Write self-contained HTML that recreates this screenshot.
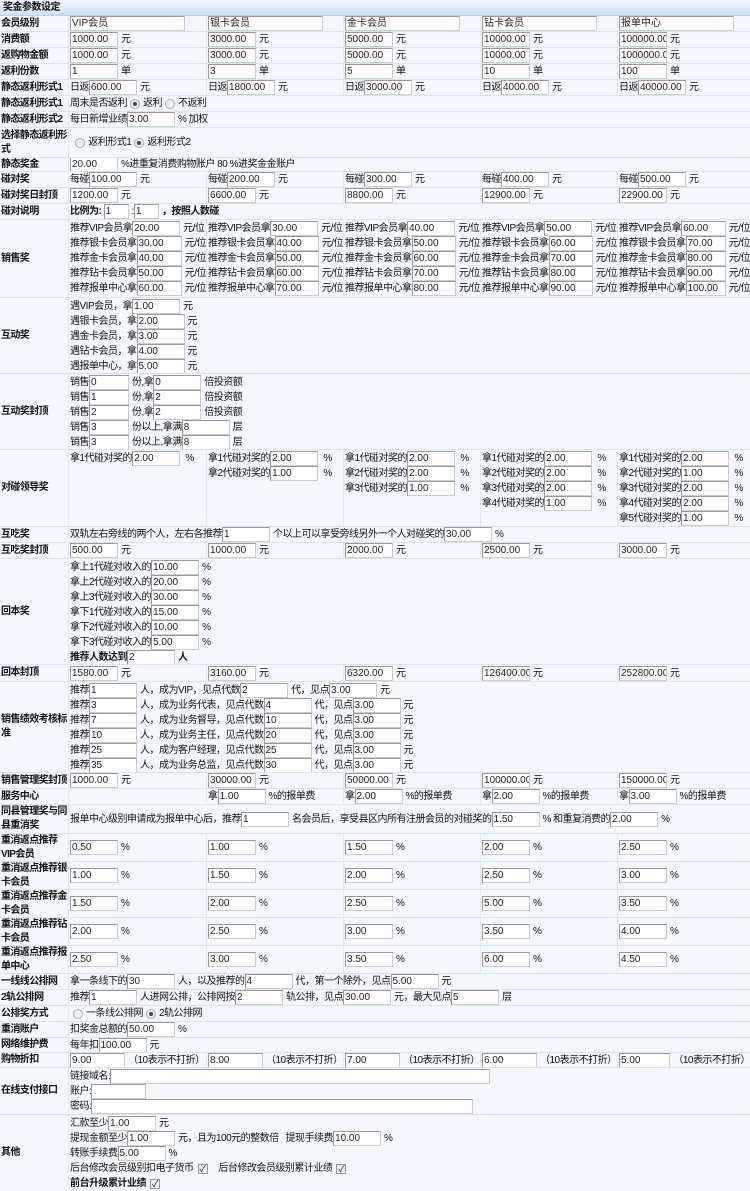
<!DOCTYPE html>
<html><head><meta charset="utf-8">
<style>
*{margin:0;padding:0;box-sizing:border-box}
body{width:750px;height:1191px;overflow:hidden;background:#f4f8fd;font-family:"Liberation Sans","Noto Sans CJK SC",sans-serif;font-size:10px;letter-spacing:-0.5px;color:#111;position:relative}
.r{position:absolute;left:0;width:750px;border-bottom:1px solid #d5e5f5}
.l{position:absolute;left:1px;top:0;width:67px;height:100%;display:flex;align-items:center;font-weight:bold;line-height:14px;letter-spacing:-0.6px}
.c{position:absolute;top:0;height:100%;display:flex;flex-direction:column;justify-content:center;white-space:nowrap;border-left:1px solid #dde9f6;padding-left:1px;overflow:hidden}
.c.t{justify-content:flex-start;padding-top:1px}
.ln{height:15px;line-height:15px;display:flex;align-items:center}
i{font-style:normal;display:inline-block;height:15px;border:1px solid #a9a9a9;border-color:#999 #ccc #ccc #999;background:#fff;width:48px;line-height:13px;padding-left:1px;color:#222;vertical-align:middle;margin:0 3px 0 0;overflow:hidden;letter-spacing:0}
.w{width:115px}
.rd{display:inline-block;width:10px;height:10px;border:1px solid #aaa;border-radius:50%;background:#eee;margin:0 3px;position:relative}
.rd.on:after{content:"";position:absolute;left:2px;top:2px;width:4px;height:4px;border-radius:50%;background:#444}
.cb{display:inline-block;width:10px;height:10px;border:1px solid #999;background:#eee;margin:0 4px;font-size:9px;line-height:8px;text-align:center}
.hd{position:absolute;left:0;top:0;width:750px;height:16px;background:linear-gradient(#eef5fc,#cfe1f3);border-bottom:1px solid #b9d3ec;font-weight:bold;padding:2px 3px;line-height:12px}
b{font-weight:bold}
.c1{left:68px;width:138px}.c2{left:206px;width:137px}.c3{left:343px;width:137px}.c4{left:480px;width:137px}.c5{left:617px;width:133px}
.wide{width:682px}
</style></head><body>
<div class="hd">奖金参数设定</div>

<div class="r" style="top:16px;height:16px"><div class="l">会员级别</div>
<div class="c c1"><div class="ln"><i class="w">VIP会员</i></div></div>
<div class="c c2"><div class="ln"><i class="w">银卡会员</i></div></div>
<div class="c c3"><div class="ln"><i class="w">金卡会员</i></div></div>
<div class="c c4"><div class="ln"><i class="w">钻卡会员</i></div></div>
<div class="c c5"><div class="ln"><i class="w">报单中心</i></div></div></div>

<div class="r" style="top:32px;height:16px"><div class="l">消费额</div>
<div class="c c1"><div class="ln"><i>1000.00</i>元</div></div>
<div class="c c2"><div class="ln"><i>3000.00</i>元</div></div>
<div class="c c3"><div class="ln"><i>5000.00</i>元</div></div>
<div class="c c4"><div class="ln"><i>10000.00</i>元</div></div>
<div class="c c5"><div class="ln"><i>100000.00</i>元</div></div></div>

<div class="r" style="top:48px;height:16px"><div class="l">返购物金额</div>
<div class="c c1"><div class="ln"><i>1000.00</i>元</div></div>
<div class="c c2"><div class="ln"><i>3000.00</i>元</div></div>
<div class="c c3"><div class="ln"><i>5000.00</i>元</div></div>
<div class="c c4"><div class="ln"><i>10000.00</i>元</div></div>
<div class="c c5"><div class="ln"><i>1000000.00</i>元</div></div></div>

<div class="r" style="top:64px;height:16px"><div class="l">返利份数</div>
<div class="c c1"><div class="ln"><i>1</i>单</div></div>
<div class="c c2"><div class="ln"><i>3</i>单</div></div>
<div class="c c3"><div class="ln"><i>5</i>单</div></div>
<div class="c c4"><div class="ln"><i>10</i>单</div></div>
<div class="c c5"><div class="ln"><i>100</i>单</div></div></div>

<div class="r" style="top:80px;height:16px"><div class="l">静态返利形式1</div>
<div class="c c1"><div class="ln">日返<i>600.00</i>元</div></div>
<div class="c c2"><div class="ln">日返<i>1800.00</i>元</div></div>
<div class="c c3"><div class="ln">日返<i>3000.00</i>元</div></div>
<div class="c c4"><div class="ln">日返<i>4000.00</i>元</div></div>
<div class="c c5"><div class="ln">日返<i>40000.00</i>元</div></div></div>

<div class="r" style="top:96px;height:16px"><div class="l">静态返利形式1</div>
<div class="c c1 wide"><div class="ln">周末是否返利<span class="rd on"></span>返利<span class="rd"></span>不返利</div></div></div>

<div class="r" style="top:112px;height:16px"><div class="l">静态返利形式2</div>
<div class="c c1 wide"><div class="ln">每日新增业绩<i>3.00</i>% 加权</div></div></div>

<div class="r" style="top:128px;height:30px"><div class="l">选择静态返利形式</div>
<div class="c c1 wide"><div class="ln">&nbsp;<span class="rd"></span>返利形式1 <span class="rd on"></span>返利形式2</div></div></div>

<div class="r" style="top:158px;height:14px"><div class="l">静态奖金</div>
<div class="c c1 wide"><div class="ln"><i>20.00</i>%进重复消费购物账户 80 %进奖金金账户</div></div></div>

<div class="r" style="top:172px;height:16px"><div class="l">碰对奖</div>
<div class="c c1"><div class="ln">每碰<i>100.00</i>元</div></div>
<div class="c c2"><div class="ln">每碰<i>200.00</i>元</div></div>
<div class="c c3"><div class="ln">每碰<i>300.00</i>元</div></div>
<div class="c c4"><div class="ln">每碰<i>400.00</i>元</div></div>
<div class="c c5"><div class="ln">每碰<i>500.00</i>元</div></div></div>

<div class="r" style="top:188px;height:16px"><div class="l">碰对奖日封顶</div>
<div class="c c1"><div class="ln"><i>1200.00</i>元</div></div>
<div class="c c2"><div class="ln"><i>6600.00</i>元</div></div>
<div class="c c3"><div class="ln"><i>8800.00</i>元</div></div>
<div class="c c4"><div class="ln"><i>12900.00</i>元</div></div>
<div class="c c5"><div class="ln"><i>22900.00</i>元</div></div></div>

<div class="r" style="top:204px;height:16px"><div class="l">碰对说明</div>
<div class="c c1 wide"><div class="ln"><b>比例为:</b>&nbsp;<i style="width:25px">1</i>:<i style="width:25px">1</i><b>，按照人数碰</b></div></div></div>

<div class="r" style="top:220px;height:78px"><div class="l">销售奖</div>
<div class="c t c1"><div class="ln">推荐VIP会员拿<i>20.00</i>元/位</div><div class="ln">推荐银卡会员拿<i>30.00</i>元/位</div><div class="ln">推荐金卡会员拿<i>40.00</i>元/位</div><div class="ln">推荐钻卡会员拿<i>50.00</i>元/位</div><div class="ln">推荐报单中心拿<i>60.00</i>元/位</div></div>
<div class="c t c2"><div class="ln">推荐VIP会员拿<i>30.00</i>元/位</div><div class="ln">推荐银卡会员拿<i>40.00</i>元/位</div><div class="ln">推荐金卡会员拿<i>50.00</i>元/位</div><div class="ln">推荐钻卡会员拿<i>60.00</i>元/位</div><div class="ln">推荐报单中心拿<i>70.00</i>元/位</div></div>
<div class="c t c3"><div class="ln">推荐VIP会员拿<i>40.00</i>元/位</div><div class="ln">推荐银卡会员拿<i>50.00</i>元/位</div><div class="ln">推荐金卡会员拿<i>60.00</i>元/位</div><div class="ln">推荐钻卡会员拿<i>70.00</i>元/位</div><div class="ln">推荐报单中心拿<i>80.00</i>元/位</div></div>
<div class="c t c4"><div class="ln">推荐VIP会员拿<i>50.00</i>元/位</div><div class="ln">推荐银卡会员拿<i>60.00</i>元/位</div><div class="ln">推荐金卡会员拿<i>70.00</i>元/位</div><div class="ln">推荐钻卡会员拿<i>80.00</i>元/位</div><div class="ln">推荐报单中心拿<i>90.00</i>元/位</div></div>
<div class="c t c5"><div class="ln">推荐VIP会员拿<i>60.00</i>元/位</div><div class="ln">推荐银卡会员拿<i>70.00</i>元/位</div><div class="ln">推荐金卡会员拿<i>80.00</i>元/位</div><div class="ln">推荐钻卡会员拿<i>90.00</i>元/位</div><div class="ln">推荐报单中心拿<i>100.00</i>元/位</div></div></div>

<div class="r" style="top:298px;height:76px"><div class="l">互动奖</div>
<div class="c t c1 wide"><div class="ln">遇VIP会员，拿<i>1.00</i>元</div><div class="ln">遇银卡会员，拿<i>2.00</i>元</div><div class="ln">遇金卡会员，拿<i>3.00</i>元</div><div class="ln">遇钻卡会员，拿<i>4.00</i>元</div><div class="ln">遇报单中心，拿<i>5.00</i>元</div></div></div>

<div class="r" style="top:374px;height:76px"><div class="l">互动奖封顶</div>
<div class="c t c1 wide"><div class="ln">销售<i style="width:40px">0</i>份,拿<i>0</i>倍投资额</div><div class="ln">销售<i style="width:40px">1</i>份,拿<i>2</i>倍投资额</div><div class="ln">销售<i style="width:40px">2</i>份,拿<i>2</i>倍投资额</div><div class="ln">销售<i style="width:40px">3</i>份以上,拿满<i>8</i>层</div><div class="ln">销售<i style="width:40px">3</i>份以上,拿满<i>8</i>层</div></div></div>

<div class="r" style="top:450px;height:77px"><div class="l">对碰领导奖</div>
<div class="c t c1"><div class="ln">拿1代碰对奖的<i>2.00</i>&nbsp;%</div></div>
<div class="c t c2"><div class="ln">拿1代碰对奖的<i>2.00</i>&nbsp;%</div><div class="ln">拿2代碰对奖的<i>1.00</i>&nbsp;%</div></div>
<div class="c t c3"><div class="ln">拿1代碰对奖的<i>2.00</i>&nbsp;%</div><div class="ln">拿2代碰对奖的<i>2.00</i>&nbsp;%</div><div class="ln">拿3代碰对奖的<i>1.00</i>&nbsp;%</div></div>
<div class="c t c4"><div class="ln">拿1代碰对奖的<i>2.00</i>&nbsp;%</div><div class="ln">拿2代碰对奖的<i>2.00</i>&nbsp;%</div><div class="ln">拿3代碰对奖的<i>2.00</i>&nbsp;%</div><div class="ln">拿4代碰对奖的<i>1.00</i>&nbsp;%</div></div>
<div class="c t c5"><div class="ln">拿1代碰对奖的<i>2.00</i>&nbsp;%</div><div class="ln">拿2代碰对奖的<i>1.00</i>&nbsp;%</div><div class="ln">拿3代碰对奖的<i>2.00</i>&nbsp;%</div><div class="ln">拿4代碰对奖的<i>2.00</i>&nbsp;%</div><div class="ln">拿5代碰对奖的<i>1.00</i>&nbsp;%</div></div></div>

<div class="r" style="top:527px;height:16px"><div class="l">互吃奖</div>
<div class="c c1 wide"><div class="ln">双轨左右旁线的两个人，左右各推荐<i>1</i>个以上可以享受旁线另外一个人对碰奖的<i>30.00</i>%</div></div></div>

<div class="r" style="top:543px;height:16px"><div class="l">互吃奖封顶</div>
<div class="c c1"><div class="ln"><i>500.00</i>元</div></div>
<div class="c c2"><div class="ln"><i>1000.00</i>元</div></div>
<div class="c c3"><div class="ln"><i>2000.00</i>元</div></div>
<div class="c c4"><div class="ln"><i>2500.00</i>元</div></div>
<div class="c c5"><div class="ln"><i>3000.00</i>元</div></div></div>

<div class="r" style="top:559px;height:106px"><div class="l">回本奖</div>
<div class="c t c1 wide"><div class="ln">拿上1代碰对收入的<i>10.00</i>%</div><div class="ln">拿上2代碰对收入的<i>20.00</i>%</div><div class="ln">拿上3代碰对收入的<i>30.00</i>%</div><div class="ln">拿下1代碰对收入的<i>15.00</i>%</div><div class="ln">拿下2代碰对收入的<i>10.00</i>%</div><div class="ln">拿下3代碰对收入的<i>5.00</i>%</div><div class="ln"><b>推荐人数达到</b><i>2</i><b>人</b></div></div></div>

<div class="r" style="top:665px;height:17px"><div class="l">回本封顶</div>
<div class="c c1"><div class="ln"><i>1580.00</i>元</div></div>
<div class="c c2"><div class="ln"><i>3160.00</i>元</div></div>
<div class="c c3"><div class="ln"><i>6320.00</i>元</div></div>
<div class="c c4"><div class="ln"><i>126400.00</i>元</div></div>
<div class="c c5"><div class="ln"><i>252800.00</i>元</div></div></div>

<div class="r" style="top:682px;height:91px"><div class="l">销售绩效考核标准</div>
<div class="c t c1 wide"><div class="ln">推荐<i>1</i>人，成为VIP，见点代数<i>2</i>代，见点<i>3.00</i>元</div><div class="ln">推荐<i>3</i>人，成为业务代表，见点代数<i>4</i>代，见点<i>3.00</i>元</div><div class="ln">推荐<i>7</i>人，成为业务督导，见点代数<i>10</i>代，见点<i>3.00</i>元</div><div class="ln">推荐<i>10</i>人，成为业务主任，见点代数<i>20</i>代，见点<i>3.00</i>元</div><div class="ln">推荐<i>25</i>人，成为客户经理，见点代数<i>25</i>代，见点<i>3.00</i>元</div><div class="ln">推荐<i>35</i>人，成为业务总监，见点代数<i>30</i>代，见点<i>3.00</i>元</div></div></div>

<div class="r" style="top:773px;height:16px"><div class="l">销售管理奖封顶</div>
<div class="c c1"><div class="ln"><i>1000.00</i>元</div></div>
<div class="c c2"><div class="ln"><i>30000.00</i>元</div></div>
<div class="c c3"><div class="ln"><i>50000.00</i>元</div></div>
<div class="c c4"><div class="ln"><i>100000.00</i>元</div></div>
<div class="c c5"><div class="ln"><i>150000.00</i>元</div></div></div>

<div class="r" style="top:789px;height:16px"><div class="l">服务中心</div>
<div class="c c1"></div>
<div class="c c2"><div class="ln">拿<i>1.00</i>%的报单费</div></div>
<div class="c c3"><div class="ln">拿<i>2.00</i>%的报单费</div></div>
<div class="c c4"><div class="ln">拿<i>2.00</i>%的报单费</div></div>
<div class="c c5"><div class="ln">拿<i>3.00</i>%的报单费</div></div></div>

<div class="r" style="top:805px;height:29px"><div class="l">同县管理奖与同县重消奖</div>
<div class="c c1 wide"><div class="ln">报单中心级别申请成为报单中心后，推荐<i>1</i>名会员后，享受县区内所有注册会员的对碰奖的<i>1.50</i>% 和重复消费的<i>2.00</i>%</div></div></div>

<div class="r" style="top:834px;height:28px"><div class="l">重消返点推荐VIP会员</div>
<div class="c c1"><div class="ln"><i>0.50</i>%</div></div><div class="c c2"><div class="ln"><i>1.00</i>%</div></div><div class="c c3"><div class="ln"><i>1.50</i>%</div></div><div class="c c4"><div class="ln"><i>2.00</i>%</div></div><div class="c c5"><div class="ln"><i>2.50</i>%</div></div></div>
<div class="r" style="top:862px;height:28px"><div class="l">重消返点推荐银卡会员</div>
<div class="c c1"><div class="ln"><i>1.00</i>%</div></div><div class="c c2"><div class="ln"><i>1.50</i>%</div></div><div class="c c3"><div class="ln"><i>2.00</i>%</div></div><div class="c c4"><div class="ln"><i>2.50</i>%</div></div><div class="c c5"><div class="ln"><i>3.00</i>%</div></div></div>
<div class="r" style="top:890px;height:28px"><div class="l">重消返点推荐金卡会员</div>
<div class="c c1"><div class="ln"><i>1.50</i>%</div></div><div class="c c2"><div class="ln"><i>2.00</i>%</div></div><div class="c c3"><div class="ln"><i>2.50</i>%</div></div><div class="c c4"><div class="ln"><i>5.00</i>%</div></div><div class="c c5"><div class="ln"><i>3.50</i>%</div></div></div>
<div class="r" style="top:918px;height:28px"><div class="l">重消返点推荐钻卡会员</div>
<div class="c c1"><div class="ln"><i>2.00</i>%</div></div><div class="c c2"><div class="ln"><i>2.50</i>%</div></div><div class="c c3"><div class="ln"><i>3.00</i>%</div></div><div class="c c4"><div class="ln"><i>3.50</i>%</div></div><div class="c c5"><div class="ln"><i>4.00</i>%</div></div></div>
<div class="r" style="top:946px;height:28px"><div class="l">重消返点推荐报单中心</div>
<div class="c c1"><div class="ln"><i>2.50</i>%</div></div><div class="c c2"><div class="ln"><i>3.00</i>%</div></div><div class="c c3"><div class="ln"><i>3.50</i>%</div></div><div class="c c4"><div class="ln"><i>6.00</i>%</div></div><div class="c c5"><div class="ln"><i>4.50</i>%</div></div></div>

<div class="r" style="top:974px;height:16px"><div class="l">一线线公排网</div>
<div class="c c1 wide"><div class="ln">拿一条线下的<i>30</i>人，以及推荐的<i>4</i>代，第一个除外，见点<i>5.00</i>元</div></div></div>
<div class="r" style="top:990px;height:16px"><div class="l">2轨公排网</div>
<div class="c c1 wide"><div class="ln">推荐<i>1</i>人进网公排，公排网按<i>2</i>轨公排，见点<i>30.00</i>元，最大见点<i>5</i>层</div></div></div>
<div class="r" style="top:1006px;height:16px"><div class="l">公排奖方式</div>
<div class="c c1 wide"><div class="ln"><span class="rd"></span>一条线公排网 <span class="rd on"></span>2轨公排网</div></div></div>
<div class="r" style="top:1022px;height:16px"><div class="l">重消账户</div>
<div class="c c1 wide"><div class="ln">扣奖金总额的<i>50.00</i>%</div></div></div>
<div class="r" style="top:1038px;height:15px"><div class="l">网络维护费</div>
<div class="c c1 wide"><div class="ln">每年扣<i>100.00</i>元</div></div></div>
<div class="r" style="top:1053px;height:15px"><div class="l">购物折扣</div>
<div class="c c1"><div class="ln"><i style="width:55px">9.00</i>（10表示不打折）</div></div>
<div class="c c2"><div class="ln"><i style="width:55px">8.00</i>（10表示不打折）</div></div>
<div class="c c3"><div class="ln"><i style="width:55px">7.00</i>（10表示不打折）</div></div>
<div class="c c4"><div class="ln"><i style="width:55px">6.00</i>（10表示不打折）</div></div>
<div class="c c5"><div class="ln"><i style="width:55px">5.00</i>（10表示不打折）</div></div></div>

<div class="r" style="top:1068px;height:47px"><div class="l">在线支付接口</div>
<div class="c t c1 wide"><div class="ln">链接域名:<i style="width:380px"></i></div><div class="ln">账户:<i style="width:55px"></i></div><div class="ln">密码:<i style="width:382px"></i></div></div></div>

<div class="r" style="top:1115px;height:76px;border:0"><div class="l">其他</div>
<div class="c t c1 wide"><div class="ln">汇款至少<i>1.00</i>元</div><div class="ln">提现金额至少<i>1.00</i>元，且为100元的整数倍 &nbsp;&nbsp;提现手续费<i>10.00</i>%</div><div class="ln">转账手续费<i>5.00</i>%</div><div class="ln">后台修改会员级别扣电子货币<span class="cb">✓</span>&nbsp;&nbsp;&nbsp;后台修改会员级别累计业绩<span class="cb">✓</span></div><div class="ln"><b>前台升级累计业绩</b><span class="cb">✓</span></div></div></div>
</body></html>
